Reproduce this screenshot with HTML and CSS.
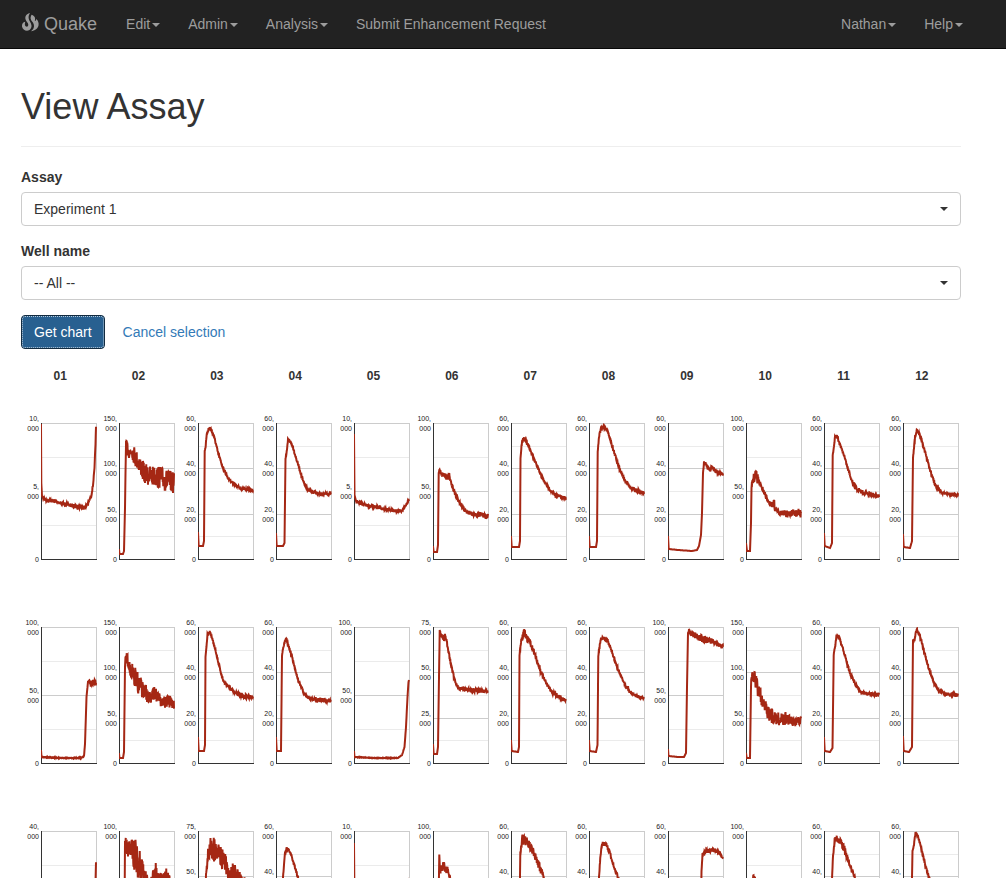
FILE: index.html
```html
<!DOCTYPE html>
<html lang="en">
<head>
<meta charset="utf-8">
<title>View Assay - Quake</title>
<link rel="stylesheet" href="styles.css">
</head>
<body>
<header class="navbar">
  <a class="brand" href="#">
    <svg class="brand-icon" viewBox="0 0 18 19" aria-hidden="true">
      <path d="M9 0C4.500 1 3.500 4.500 5 7.500 6 9.500 8 10.500 7 13 6 14.300 4.300 13.500 4 12.200 3.600 11 4.200 9.700 4.200 8.800 2 9 .8 11 1 13.500 1.500 16 3.500 17.600 6 17.800 9 17.500 10.700 15 10.500 12.500 10.300 9.500 7.800 8 7.600 5 7.500 3 8 1.500 9 0Z"/>
      <path d="M10.500 1.800C14.500 3 14.500 6 13.800 8 14.500 8.200 15.200 7.200 15.200 6 17.200 7.500 18 10 17.500 12.500 17 15.500 14 17.500 10 18.200 12.500 16.500 13.500 14 12.800 11.500 12.200 9 10 8 9.600 5.500 9.500 4 10 3 10.500 1.800Z"/>
    </svg>
    <span>Quake</span>
  </a>
  <nav class="nav">
    <a class="nav-link" href="#">Edit<span class="caret"></span></a>
    <a class="nav-link" href="#">Admin<span class="caret"></span></a>
    <a class="nav-link" href="#">Analysis<span class="caret"></span></a>
    <a class="nav-link" href="#">Submit Enhancement Request</a>
  </nav>
  <nav class="nav nav-right">
    <a class="nav-link" href="#">Nathan<span class="caret"></span></a>
    <a class="nav-link" href="#">Help<span class="caret"></span></a>
  </nav>
</header>
<main class="content">
  <h1 class="page-title">View Assay</h1>
  <form class="assay-form">
    <div class="form-group">
      <label class="form-label" for="assay">Assay</label>
      <div class="select-wrap">
        <select class="select" id="assay"><option>Experiment 1</option></select>
        <span class="caret select-caret"></span>
      </div>
    </div>
    <div class="form-group">
      <label class="form-label" for="well">Well name</label>
      <div class="select-wrap">
        <select class="select" id="well"><option>-- All --</option></select>
        <span class="caret select-caret"></span>
      </div>
    </div>
    <div class="actions">
      <button class="btn" type="button">Get chart</button>
      <a class="cancel" href="#">Cancel selection</a>
    </div>
  </form>
  <div class="plate-head" id="plate-head"></div>
  <div class="plate" id="plate"></div>
</main>
<script src="charts.js"></script>
</body>
</html>
```
FILE: styles.css
```css
* {
  box-sizing: border-box;
}

body {
  margin: 0;
  background: #fff;
  color: #333;
  font-family: "Liberation Sans", Arial, sans-serif;
  font-size: 14px;
  line-height: 20px;
}

a {
  text-decoration: none;
}

.navbar {
  display: flex;
  align-items: center;
  height: 49px;
  padding: 0 43px 0 21px;
  background: #222;
  border-bottom: 1px solid #080808;
}

.brand {
  display: flex;
  align-items: center;
  gap: 5px;
  color: #9d9d9d;
  font-size: 18px;
}

.brand-icon {
  width: 18px;
  height: 19px;
  margin-bottom: 4px;
  fill: currentColor;
}

.nav {
  display: flex;
  gap: 28px;
  margin-left: 29px;
}

.nav-right {
  margin-left: auto;
}

.nav-link {
  display: flex;
  align-items: center;
  gap: 2px;
  color: #9d9d9d;
}

.caret {
  width: 0;
  height: 0;
  border: 4px solid transparent;
  border-top-color: currentColor;
  border-bottom: 0;
}

.nav-link .caret {
  margin-top: 2px;
}

.content {
  padding: 38px 45px 0 21px;
}

.page-title {
  margin: 0 0 20px;
  padding-bottom: 19px;
  border-bottom: 1px solid #eee;
  font-size: 36px;
  font-weight: 400;
  line-height: 40px;
}

.form-group {
  margin-bottom: 15px;
}

.form-label {
  display: block;
  margin-bottom: 5px;
  font-weight: 700;
}

.select-wrap {
  position: relative;
}

.select {
  display: block;
  width: 100%;
  height: 34px;
  padding: 0 32px 0 12px;
  appearance: none;
  background: #fff;
  border: 1px solid #ccc;
  border-radius: 4px;
  color: #333;
  font: inherit;
}

.select-caret {
  position: absolute;
  top: 15px;
  right: 13px;
  pointer-events: none;
}

.actions {
  display: flex;
  align-items: center;
  gap: 18px;
}

.btn {
  height: 34px;
  padding: 0 12px;
  background: #286090;
  border: 1px solid #122b40;
  border-radius: 4px;
  outline: 1px dotted #b9cbda;
  outline-offset: -2px;
  color: #fff;
  font: inherit;
}

.cancel {
  color: #337ab7;
}

.plate-head,
.plate {
  display: grid;
  grid-template-columns: repeat(12, 1fr);
}

.plate-head {
  padding: 18px 0 14px;
  font-size: 12px;
  font-weight: 700;
  line-height: 18px;
  text-align: center;
}

.chart {
  display: block;
  width: 78px;
  height: 204px;
  font-size: 7px;
}

.chart text {
  fill: #222;
  text-anchor: end;
}

.grid-major {
  fill: #ccc;
}

.grid-minor {
  fill: #ebebeb;
}

.axis {
  fill: #333;
}

.trace {
  fill: none;
  stroke: #a52714;
  stroke-width: 2;
}
```
FILE: charts.js
```js
// Each chart: [axis maximum in thousands, number of major steps, jitter, trace].
// A trace is a list of "x,y" or "x,y,jitter" entries in plot units (55 by 136).
const rows = [
  [
    [10, 2, 1.6, "0,1 .3,60 1,73 2,75 5,77 13,78 20,80 28,82 38,84 44,84 47,80,1 50,74 52,62 53.5,45,0 54.5,20 55,5"],
    [150, 3, 0, "0,126 .5,131 4,131 5,128 6,85 6.5,50 7,22 7,20,2 9,27,7 11,30,5 13,26,8 16,34,8 20,40,8 25,50,9 30,53,9 36,53,9 42,55,10 48,58,10 55,60,9"],
    [60, 3, 1.3, "0,109 .7,123,0 5,123,0 6,118,0 6.7,28,0 7.5,24 9,10 10.5,6 12,5 14,8 17,17 20,30 25,45 30,55 35,60 40,64 45,66 55,67"],
    [60, 3, 1.4, "0,110 .7,123,0 7,123,0 8.5,120,0 9.5,35 11,28 12,17 14,18 17,24 20,35 23,44 27,58 31,66 36,69 45,71 55,71"],
    [10, 2, 1.3, "0,11 .5,72 2,78 8,81 15,83 25,84 30,86 42,88 48,87 52,83 55,76"],
    [100, 2, 2, "0,123 .7,129,0 4,129,0 5,122,0 5.7,50,0 6.3,46 8,51 12,53,3 15,55,3 16,51 18,60 22,70 27,80 32,88 40,91 55,93"],
    [60, 3, 1.4, "0,113 .7,124,0 8,124,0 9,118,0 9.5,35 11,18 13,15 17,21 22,34 28,48 34,60 40,68 44,72 55,75"],
    [60, 3, 1.6, "0,113 .7,124,0 7,124,0 8,118,0 8.7,28 10.5,10 13,4 17,5 20,12 24,26 30,44 36,58 42,65 55,70"],
    [60, 3, 2, "0,113 .7,126,0 10,127,0 24,128,0 29,127,0 31,123,0 33,112,0 34,90,0 35,50,0 36,40 39,43 42,47 44,44 48,48 55,52,1"],
    [100, 2, 2, "0,120 1,128,0 4,128,0 5,100,0 5.5,63 7,57,4 9,52,5 11,54,5 14,62 18,69 22,78 26,82 28,79,5 29,86 32,89 40,91,3 55,90,4"],
    [60, 3, 1.4, "0,110 .7,123,0 6,125,0 8,120,0 8.7,33 11,15 13,13 16,22 20,32 24,46 28,58 33,66,2 40,70,2 55,73"],
    [60, 3, 1.4, "0,111 .7,124,0 7,125,0 9,118,0 10,35 12,15 14,7 18,15 22,29 27,47 32,62 38,69 45,71 55,72,2"]
  ],
  [
    [100, 2, .3, "0,123 .5,130 20,131 40,131 43,129 44,117 45.5,70 47,55 48,54 50,57,3 52,56,3 55,56,3"],
    [150, 3, 0, "0,126 .5,131 4,131 5,125 6,40 6.5,32,3 8,32,6 11,41,6 16,50,9 20,58,9 26,66,8 32,70,6 36,66,7 42,74,5 50,75,6 55,78,4"],
    [60, 3, 1.4, "0,110 .7,124,0 6,124,0 7,118,0 7.5,30,0 9.5,8 12,5 14,11 17,22 21,38 25,54 30,59 37,66 45,69,2 55,70"],
    [60, 3, 1.4, "0,110 .7,124,0 5,124,0 6,28 8,17 10,11 13,20 17,34 22,53 28,66 33,71 45,73,2 55,74"],
    [100, 2, .2, "0,124 .5,130 20,131 44,131 48,128 50.5,120 52,100 53.5,70 54.5,55 55,53"],
    [75, 3, 1.8, "0,117 .7,127,0 4,127,0 5,120,0 6,50,0 6.7,5 9,9 11,14 12,8 14,16 18,38 22,54 26,62 35,63 55,64"],
    [60, 3, 1.8, "0,113 .7,124,0 7,125,0 8,120,0 8.5,28 10,15 13,6,4 15,10,4 18,13,3 24,28 30,46 36,58 42,66 48,70 55,73"],
    [60, 3, 1.5, "0,113 .7,124,0 7,125,0 8.5,118,0 9.3,28 12,11 15,11 19,14 24,28 30,45 36,58 43,67 50,70 55,71"],
    [100, 2, 2, "0,122 .5,129,0 10,130,0 16,130,0 18,126,0 19,60,0 20,6,0 21,4 25,8 32,11,3 40,13,3 46,15 55,20"],
    [150, 3, 0, "0,126 .7,131 4,131 5,60 5.5,48,3 9,53,7 12,62,7 16,72,7 20,83,7 25,88,7 30,92,6 40,92,6 48,96,4 55,92,4"],
    [60, 3, 1.3, "0,110 .7,124,0 6,125,0 8.5,121,0 9.7,28 11,20 12.5,8 15,10 18,19 22,32 26,46 31,57 36,65 45,67 55,68,2"],
    [60, 3, 1.4, "0,109 .7,124,0 6,125,0 9,120,0 10,12 11.5,15 12.5,6 14,3 17,9 21,24 26,42 31,56 37,65 45,67 55,68,2"]
  ],
  [
    [40, 2, .3, "0,124 1,130 40,132 50,124 53,100 54.3,60 55,31"],
    [100, 2, 0, "0,126 1,131 4,131 5.5,90 6,10 6.5,18,10 10,18,7 14,22,13 18,28,16 23,42,12 28,54,9 33,56,9 36,38,14 38,50,9 44,52,9 47,47,9 55,62,9"],
    [75, 3, 0, "0,120 1,127 6,127 7.5,60 8,45,3 10,24,6 12,18,12 16,18,11 20,22,8 26,30,12 31,43,9 36,44,10 42,50,9 55,64,8"],
    [60, 3, 1.6, "0,110 .7,124,0 6,124,0 7,45 9,22 11,17 15,23 18,33 22,47 30,66 55,71"],
    [10, 2, 1, "0,12 .5,72 8,81 25,84 45,80 52,62 55,47"],
    [100, 2, 2, "0,123 .7,129,0 4,129,0 5,122,0 6,40 6.3,24 7,38,5 9,35,5 12,38,5 15,40,3 17,47 25,75 55,93"],
    [60, 3, 2, "0,113 .7,124,0 7,124,0 8,118,0 9.3,23 11,9,5 14,9,4 18,14,4 22,20,3 28,34,4 33,47 45,70 55,73"],
    [60, 3, 1.8, "0,113 .7,124,0 7,124,0 9,118,0 10,47 11,30 13,13 17,13 20,20 25,35 29,47 40,68 55,72"],
    [60, 3, 1.8, "0,113 .7,126,0 24,128,0 31,128,0 32.5,110,0 33.5,40,0 34.5,24 38,20 45,19 51,21 55,27"],
    [100, 2, 2, "0,120 1,128,0 4,128,0 5.500,80,0 7,46 9,49,3 14,62 25,84 40,91 55,90"],
    [60, 3, 1.8, "0,110 .7,124,0 6,125,0 7,118,0 8,47 9,25 11,7 13,7,3 17,12,3 20,17,4 25,32 30,44 32,50 45,68 55,70"],
    [60, 3, 1.4, "0,109 .7,124,0 6,125,0 8,120,0 9,47 9.5,20 11,13 12.5,2 15,5 18,17 22,33 26,47 38,68 55,70"]
  ]
];

const left = 20;
const top0 = 24;
const plotWidth = 55;
const plotHeight = 136;
let seed = 7;

function random() {
  seed = (seed * 16807) % 2147483647;
  return seed / 2147483647 * 2 - 1;
}

function tracePath(trace, jitter) {
  const points = trace.split(" ").map(entry => {
    const [x, y, j = jitter] = entry.split(",").map(Number);
    return { x, y, j };
  });
  let d = "M" + points[0].x + " " + points[0].y;
  for (let i = 1; i < points.length; i++) {
    const a = points[i - 1];
    const b = points[i];
    const steps = Math.max(1, Math.round((b.x - a.x) / 0.25));
    for (let s = 1; s <= steps; s++) {
      const t = s / steps;
      const x = a.x + (b.x - a.x) * t;
      const spread = b.x < 5 ? 0 : (a.j + (b.j - a.j) * t) * 1.15;
      const y = Math.max(1, a.y + (b.y - a.y) * t + random() * spread);
      d += "L" + x.toFixed(2) + " " + y.toFixed(1);
    }
  }
  return d;
}

function chart([max, count, jitter, trace]) {
  let grid = "";
  let labels = "";
  for (let i = 0; i <= count; i++) {
    const y = top0 + Math.round(plotHeight * i / count);
    if (i < count) {
      const mid = top0 + Math.round(plotHeight * (i + 0.5) / count);
      grid += `<rect class="grid-major" x="${left}" y="${y}" width="56" height="1"/>`;
      grid += `<rect class="grid-minor" x="${left}" y="${mid}" width="56" height="1"/>`;
      labels += `<text x="18" y="${y - 2}">${max * (count - i) / count},</text>`;
      labels += `<text x="18" y="${y + 8}">000</text>`;
    } else {
      labels += `<text x="18" y="${y + 3}">0</text>`;
    }
  }
  return `<svg class="chart" viewBox="0 0 78 204" role="img">${grid}
    <rect class="grid-major" x="${left + plotWidth}" y="${top0}" width="1" height="137"/>
    <rect class="axis" x="${left}" y="${top0}" width="1" height="137"/>
    <rect class="axis" x="${left}" y="${top0 + plotHeight}" width="56" height="1"/>
    <svg x="${left}" y="${top0}" width="56" height="137"><path class="trace" d="${tracePath(trace, jitter)}"/></svg>
    ${labels}</svg>`;
}

document.getElementById("plate-head").innerHTML =
  rows[0].map((_, i) => `<div>${String(i + 1).padStart(2, "0")}</div>`).join("");
document.getElementById("plate").innerHTML = rows.flat().map(chart).join("");
```
